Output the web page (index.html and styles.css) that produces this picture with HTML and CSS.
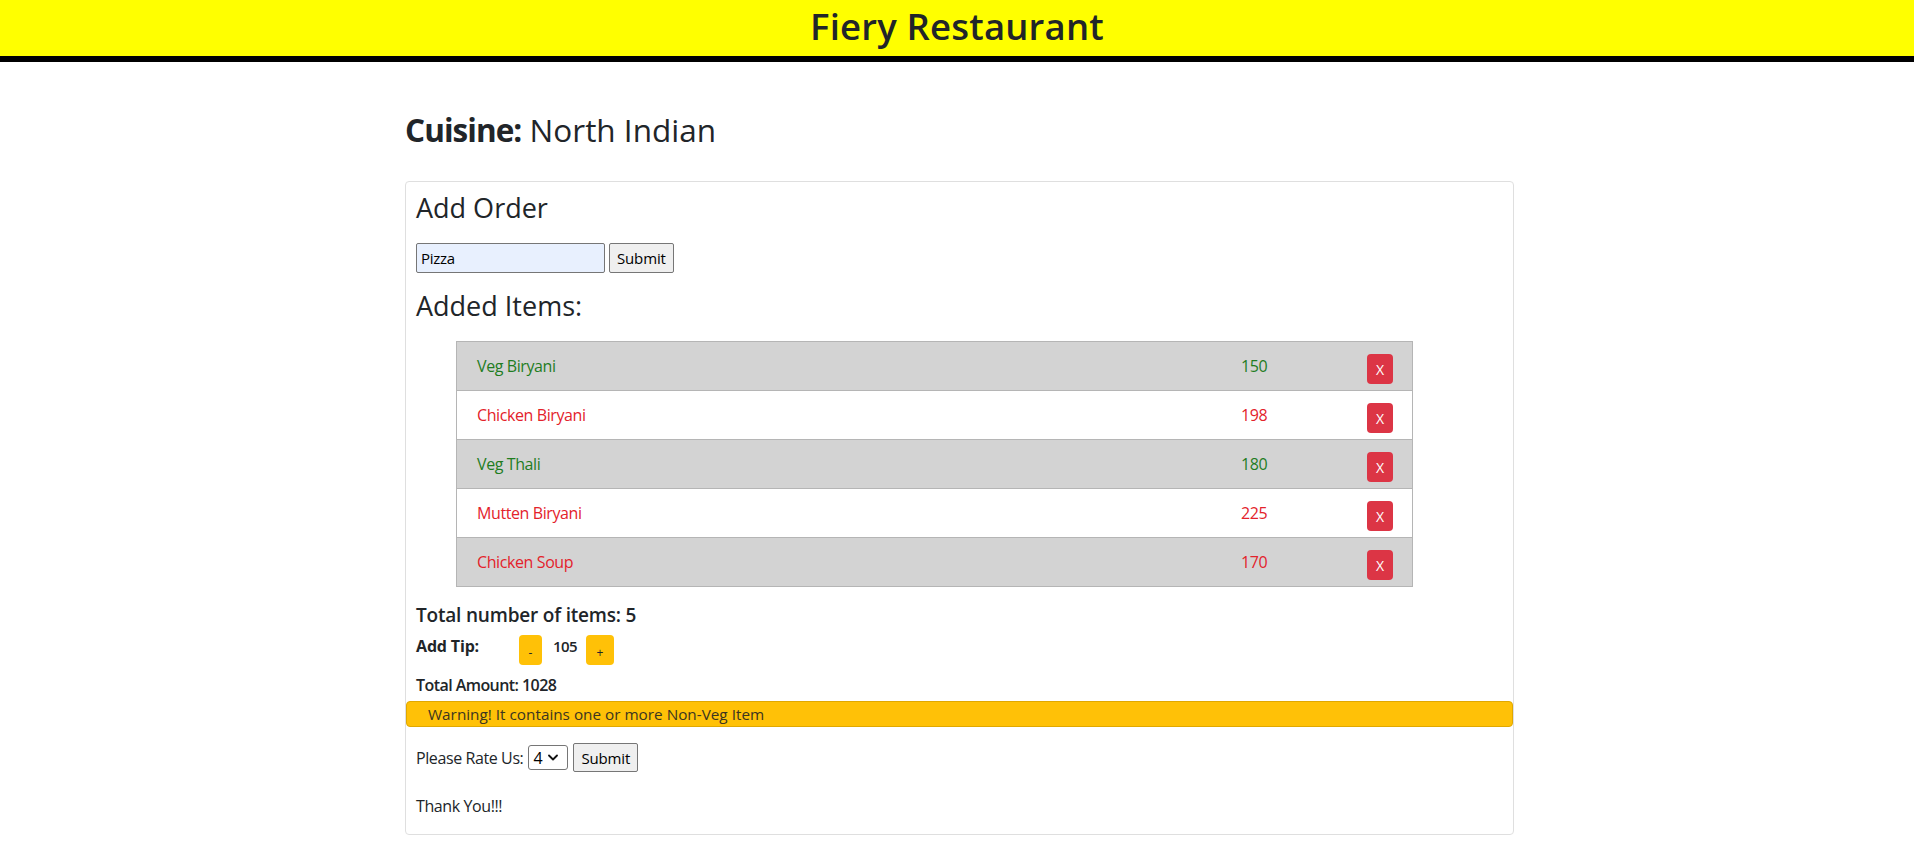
FILE: index.html
```html
<!DOCTYPE html>
<html lang="en">
<head>
<meta charset="utf-8">
<title>Fiery Restaurant</title>
<link rel="stylesheet" href="styles.css">
</head>
<body>
<header class="topbar">
  <h1 class="brand">Fiery Restaurant</h1>
</header>
<main class="page">
  <h2 class="cuisine"><span class="cuisine-label">Cuisine:</span> North Indian</h2>
  <section class="card">
    <h3 class="section-title">Add Order</h3>
    <form class="order-form">
      <input class="text-input" type="text" value="Pizza">
      <button class="native-btn" type="button">Submit</button>
    </form>
    <h3 class="section-title items-title">Added Items:</h3>
    <div class="items">
      <div class="item-row shaded veg">
        <span class="item-name">Veg Biryani</span>
        <span class="item-price">150</span>
        <span class="item-action"><button class="remove-btn" type="button">X</button></span>
      </div>
      <div class="item-row nonveg">
        <span class="item-name">Chicken Biryani</span>
        <span class="item-price">198</span>
        <span class="item-action"><button class="remove-btn" type="button">X</button></span>
      </div>
      <div class="item-row shaded veg">
        <span class="item-name">Veg Thali</span>
        <span class="item-price">180</span>
        <span class="item-action"><button class="remove-btn" type="button">X</button></span>
      </div>
      <div class="item-row nonveg">
        <span class="item-name">Mutten Biryani</span>
        <span class="item-price">225</span>
        <span class="item-action"><button class="remove-btn" type="button">X</button></span>
      </div>
      <div class="item-row shaded nonveg">
        <span class="item-name">Chicken Soup</span>
        <span class="item-price">170</span>
        <span class="item-action"><button class="remove-btn" type="button">X</button></span>
      </div>
    </div>
    <h5 class="total-items">Total number of items: 5</h5>
    <div class="tip-row">
      <span class="tip-label">Add Tip:</span>
      <button class="tip-btn tip-minus" type="button">-</button>
      <span class="tip-value">105</span>
      <button class="tip-btn tip-plus" type="button">+</button>
    </div>
    <div class="total-amount">Total Amount: 1028</div>
    <div class="warning-bar">Warning! It contains one or more Non-Veg Item</div>
    <div class="rate-row">
      <span class="rate-label">Please Rate Us:</span>
      <div class="select-box">
        <span class="select-value">4</span>
        <svg class="chevron" width="10" height="7" viewBox="0 0 10 7"><path d="M1 1.5 L5 5.5 L9 1.5" fill="none" stroke="#111" stroke-width="1.8" stroke-linecap="round" stroke-linejoin="round"/></svg>
      </div>
      <button class="native-btn" type="button">Submit</button>
    </div>
    <p class="thanks">Thank You!!!</p>
  </section>
</main>
</body>
</html>
```

FILE: styles.css
```css
* {
  box-sizing: border-box;
}

html, body {
  margin: 0;
  padding: 0;
  background: #ffffff;
}

body {
  font-family: "Open Sans", "Noto Sans", sans-serif;
  color: #212529;
  font-size: 16px;
  line-height: 24px;
  letter-spacing: -0.025em;
  padding-left: 5px;
}

.topbar {
  background: #ffff00;
  border-bottom: 6px solid #000000;
  height: 62px;
  margin-left: -5px;
}

.brand {
  margin: 0;
  text-align: center;
  font-size: 36.5px;
  font-weight: 600;
  line-height: 52px;
  letter-spacing: 0.005em;
  color: #212529;
}

.page {
  width: 1109px;
  margin: 0 auto;
}

.cuisine {
  margin: 50px 0 0;
  font-size: 31.5px;
  line-height: 36px;
  font-weight: 400;
  letter-spacing: 0;
}

.cuisine-label {
  font-weight: 700;
  letter-spacing: -0.03em;
}

.card {
  margin-top: 33px;
  border: 1px solid #dfdfdf;
  border-radius: 4px;
  padding: 10px 10px 16px;
}

.section-title {
  margin: 0 0 19px;
  font-size: 27px;
  line-height: 32px;
  font-weight: 500;
  letter-spacing: 0;
}

.items-title {
  margin-top: 17px;
}

.order-form {
  display: flex;
  gap: 4px;
  margin: 0;
}

.text-input {
  width: 189px;
  height: 30px;
  border: 1px solid #767676;
  border-radius: 2px;
  background: #e8f0fe;
  font-family: inherit;
  font-size: 15px;
  letter-spacing: -0.02em;
  color: #000;
  padding: 0 4px;
}

.native-btn {
  height: 30px;
  border: 1px solid #767676;
  border-radius: 2px;
  background: #efefef;
  font-family: inherit;
  font-size: 15px;
  letter-spacing: -0.01em;
  color: #000;
  padding: 0 7px;
}

.items {
  width: 957px;
  margin-left: 40px;
  border: 1px solid #b5b5b5;
  border-top: 0;
}

.item-row {
  display: grid;
  grid-template-columns: 784px 126px 1fr;
  height: 49px;
  border-top: 1px solid #b5b5b5;
  align-items: center;
  background: #ffffff;
}

.item-row.shaded {
  background: #d3d3d3;
}

.item-row.veg {
  color: #1f7d1f;
}

.item-row.nonveg {
  color: #e3222b;
}

.item-name {
  padding-left: 20px;
}

.item-action {
  align-self: start;
  padding-top: 12px;
}

.remove-btn {
  width: 26px;
  height: 30px;
  border: 0;
  border-radius: 4px;
  background: #dc3545;
  color: #ffffff;
  font-family: inherit;
  font-size: 14px;
  padding: 0;
}

.total-items {
  margin: 16px 0 0;
  font-size: 19px;
  line-height: 24px;
  font-weight: 600;
  letter-spacing: -0.01em;
}

.tip-row {
  display: flex;
  align-items: flex-start;
  margin-top: 7px;
  font-weight: 700;
  font-size: 16px;
  letter-spacing: -0.01em;
}

.tip-label {
  width: 103px;
}

.tip-btn {
  margin-top: 1px;
  height: 30px;
  border: 0;
  border-radius: 4px;
  background: #ffc107;
  color: #212529;
  font-family: inherit;
  font-size: 12px;
  padding: 4px 0 0;
}

.tip-minus {
  width: 23px;
}

.tip-plus {
  width: 28px;
}

.tip-value {
  margin: 0 9px 0 11px;
  font-weight: 600;
  font-size: 15px;
  letter-spacing: -0.04em;
}

.total-amount {
  margin-top: 8px;
  font-weight: 600;
  font-size: 16px;
  letter-spacing: -0.035em;
}

.warning-bar {
  margin: 4px -10px 0;
  height: 26px;
  background: #ffc107;
  border: 1px solid #e0a800;
  border-radius: 4px;
  padding-left: 21px;
  font-size: 15.3px;
  line-height: 24px;
  letter-spacing: 0;
  color: #3b3520;
}

.rate-row {
  display: flex;
  align-items: center;
  gap: 5px;
  margin-top: 16px;
  height: 29px;
}

.select-box {
  width: 40px;
  height: 25px;
  border: 1px solid #767676;
  border-radius: 3px;
  display: flex;
  align-items: center;
  justify-content: space-between;
  padding: 0 9px 0 4px;
  color: #000;
}

.chevron {
  display: block;
}

.rate-row .native-btn {
  height: 29px;
}

.thanks {
  margin: 22px 0 0;
}
```
